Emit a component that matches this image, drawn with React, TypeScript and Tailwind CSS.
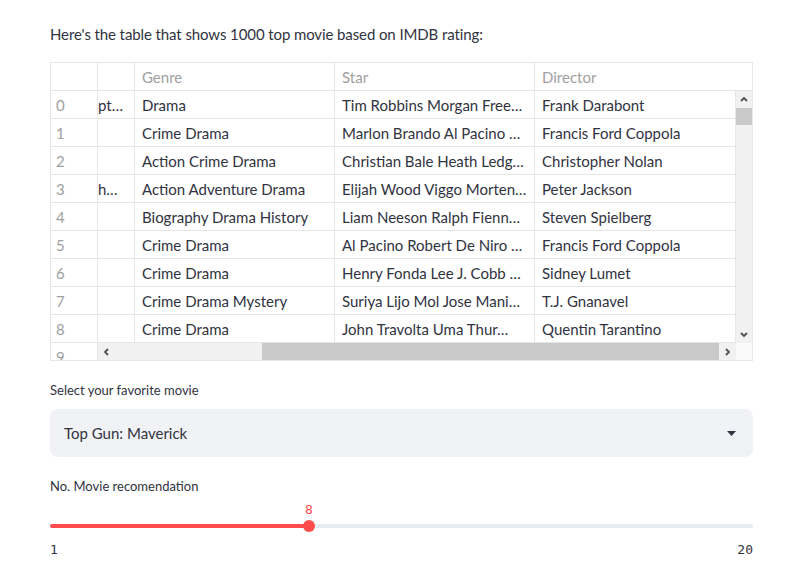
const rows = [
  { id: "0", title: "pt…", genre: "Drama", star: "Tim Robbins Morgan Free…", director: "Frank Darabont" },
  { id: "1", title: "", genre: "Crime Drama", star: "Marlon Brando Al Pacino …", director: "Francis Ford Coppola" },
  { id: "2", title: "", genre: "Action Crime Drama", star: "Christian Bale Heath Ledg…", director: "Christopher Nolan" },
  { id: "3", title: "h…", genre: "Action Adventure Drama", star: "Elijah Wood Viggo Morten…", director: "Peter Jackson" },
  { id: "4", title: "", genre: "Biography Drama History", star: "Liam Neeson Ralph Fienn…", director: "Steven Spielberg" },
  { id: "5", title: "", genre: "Crime Drama", star: "Al Pacino Robert De Niro …", director: "Francis Ford Coppola" },
  { id: "6", title: "", genre: "Crime Drama", star: "Henry Fonda Lee J. Cobb …", director: "Sidney Lumet" },
  { id: "7", title: "", genre: "Crime Drama Mystery", star: "Suriya Lijo Mol Jose Mani…", director: "T.J. Gnanavel" },
  { id: "8", title: "", genre: "Crime Drama", star: "John Travolta Uma Thur…", director: "Quentin Tarantino" },
];

const Chevron = ({ dir }: { dir: "up" | "down" | "left" | "right" }) => {
  const d = {
    up: "M1 5 L4 2 L7 5",
    down: "M1 2 L4 5 L7 2",
    left: "M5 1 L2 4 L5 7",
    right: "M2 1 L5 4 L2 7",
  }[dir];
  return (
    <svg width="8" height="8" viewBox="0 0 8 8" fill="none">
      <path d={d} stroke="#505050" strokeWidth="1.8" />
    </svg>
  );
};

export default function App() {
  const value = 8;
  const pct = ((value - 1) / 19) * 100;

  return (
    <div
      className="w-[800px] h-[570px] bg-white pl-[50px] pr-[47px] pt-[22px] text-[#31333f]"
      style={{ fontFamily: "Lato, 'Noto Sans', sans-serif" }}
    >
      <p className="text-[15px] leading-6 tracking-[-0.1px]">
        Here's the table that shows 1000 top movie based on IMDB rating:
      </p>

      <div className="mt-4 w-[703px] border border-[#e6e6e6] text-[15px]">
        <div className="flex h-[28px] border-b border-[#e6e6e6] text-[#a0a0a0]">
          <div className="w-[47px] border-r border-[#e6e6e6]" />
          <div className="w-[37px] border-r border-[#e6e6e6]" />
          <div className="w-[200px] border-r border-[#e6e6e6] px-[7px] leading-[28px]">Genre</div>
          <div className="w-[200px] border-r border-[#e6e6e6] px-[7px] leading-[28px]">Star</div>
          <div className="flex-1 px-[7px] leading-[28px]">Director</div>
        </div>
        <div className="flex">
          <div className="flex w-[685px] flex-col">
            {rows.map((r) => (
              <div key={r.id} className="flex h-[28px] border-b border-[#e6e6e6]">
                <div className="w-[47px] border-r border-[#e6e6e6] px-[5px] leading-[28px] text-[#a0a0a0]">{r.id}</div>
                <div className="w-[37px] overflow-hidden whitespace-nowrap border-r border-[#e6e6e6] leading-[28px]">{r.title}</div>
                <div className="w-[200px] truncate border-r border-[#e6e6e6] px-[7px] leading-[28px]">{r.genre}</div>
                <div className="w-[200px] truncate border-r border-[#e6e6e6] px-[7px] leading-[28px]">{r.star}</div>
                <div className="flex-1 truncate border-r border-[#e6e6e6] px-[7px] leading-[28px]">{r.director}</div>
              </div>
            ))}
            <div className="flex h-[17px]">
              <div className="w-[47px] overflow-hidden border-r border-[#e6e6e6] px-[5px] leading-[28px] text-[#a0a0a0]">9</div>
              <div className="flex flex-1 items-center bg-[#f1f1f1]">
                <div className="flex w-[18px] justify-center"><Chevron dir="left" /></div>
                <div className="w-[146px]" />
                <div className="h-full w-[457px] bg-[#c9c9c9]" />
                <div className="flex flex-1 justify-center"><Chevron dir="right" /></div>
              </div>
            </div>
          </div>
          <div className="flex w-[16px] flex-col">
            <div className="flex h-[252px] flex-col bg-[#f1f1f1]">
              <div className="flex h-[17px] items-center justify-center"><Chevron dir="up" /></div>
              <div className="h-[17px] bg-[#c9c9c9]" />
              <div className="flex-1" />
              <div className="flex h-[17px] items-center justify-center"><Chevron dir="down" /></div>
            </div>
            <div className="flex-1 bg-[#fafafa]" />
          </div>
        </div>
      </div>

      <div className="mt-[19px] text-[13px] leading-5">Select your favorite movie</div>
      <div className="mt-[9px] flex h-[48px] items-center justify-between rounded-lg bg-[#f0f2f6] pl-[14px] pr-[17px]">
        <span className="text-[15px]">Top Gun: Maverick</span>
        <svg width="9" height="5" viewBox="0 0 9 5">
          <path d="M0 0 L9 0 L4.5 5 Z" fill="#31333f" />
        </svg>
      </div>

      <div className="mt-[19px] text-[13px] leading-5">No. Movie recomendation</div>
      <div className="flex flex-col">
        <div className="flex h-[22px] items-end">
          <div style={{ width: `${pct}%` }} />
          <span
            className="-translate-x-1/2 text-[13px] leading-4 text-[#ff4b4b]"
            style={{ fontFamily: "'DejaVu Sans Mono', monospace" }}
          >
            {value}
          </span>
        </div>
        <div className="mt-[2px] flex h-[12px] items-center">
          <div className="flex h-[4px] w-full items-center rounded-full bg-[#e6eaf1]">
            <div className="h-full rounded-l-full bg-[#ff4b4b]" style={{ width: `${pct}%` }} />
            <div className="-ml-[6px] h-[12px] w-[12px] rounded-full bg-[#ff4b4b]" />
          </div>
        </div>
        <div
          className="mt-[8px] flex justify-between text-[13px] leading-5"
          style={{ fontFamily: "'DejaVu Sans Mono', monospace" }}
        >
          <span>1</span>
          <span>20</span>
        </div>
      </div>
    </div>
  );
}
